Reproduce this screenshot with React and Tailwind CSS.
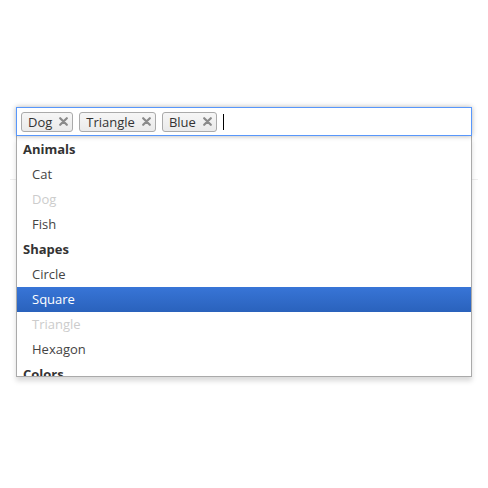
import React from 'react';

const chips = ['Dog', 'Triangle', 'Blue'];

const groups = [
  { label: 'Animals', items: [{ name: 'Cat' }, { name: 'Dog', selected: true }, { name: 'Fish' }] },
  {
    label: 'Shapes',
    items: [
      { name: 'Circle' },
      { name: 'Square', highlighted: true },
      { name: 'Triangle', selected: true },
      { name: 'Hexagon' },
    ],
  },
  { label: 'Colors', items: [{ name: 'Red' }, { name: 'Blue', selected: true }] },
];

const CloseIcon = () => (
  <svg width="9" height="9" viewBox="0 0 9 9" className="shrink-0">
    <path d="M1.2 1.2L7.8 7.8M7.8 1.2L1.2 7.8" stroke="#8a8a8a" strokeWidth="2.2" strokeLinecap="round" />
  </svg>
);

const Chip = ({ label }) => (
  <li className="flex items-center gap-[7px] h-5 pl-[6px] pr-[4px] rounded-[3px] border border-[#aaa] bg-gradient-to-b from-[#f6f6f6] to-[#eaeaea] text-[#333] text-[13px] leading-[18px]">
    <span>{label}</span>
    <CloseIcon />
  </li>
);

const Option = ({ item }) => {
  let cls = 'text-[#444]';
  if (item.selected) cls = 'text-[#ccc]';
  if (item.highlighted) cls = 'text-white bg-gradient-to-b from-[#3875d7] to-[#2a62bc]';
  return <li className={`h-[25px] pl-[15px] pr-[6px] leading-[25px] ${cls}`}>{item.name}</li>;
};

export default function App() {
  return (
    <div className="w-[488px] h-[488px] bg-white" style={{ fontFamily: '"Open Sans", "Noto Sans", sans-serif' }}>
      <div className="pt-[107px] pl-[16px]">
        <div className="relative w-[456px]">
          {/* input area */}
          <ul className="flex items-center gap-[6px] h-[29px] px-[4px] border border-[#5897fb] bg-white shadow-[0_0_5px_rgba(0,0,0,0.3)] relative z-20">
            {chips.map((c) => (
              <Chip key={c} label={c} />
            ))}
            <li className="w-px h-[16px] bg-black" />
          </ul>

          {/* dropdown */}
          <div className="absolute left-0 right-0 top-full z-10 h-[241px] overflow-hidden bg-white border border-t-0 border-[#aaa] shadow-[0_4px_5px_rgba(0,0,0,0.15)]">
            <ul className="pt-px text-[13px]">
              {groups.map((g) => (
                <React.Fragment key={g.label}>
                  <li className="h-[25px] pl-[6px] leading-[25px] font-bold text-[#333]">{g.label}</li>
                  {g.items.map((it) => (
                    <Option key={g.label + it.name} item={it} />
                  ))}
                </React.Fragment>
              ))}
            </ul>
          </div>
        </div>
      </div>
      {/* faint page rule under the dropdown */}
      <div className="mx-[10px] h-[44px] border-b border-[#eee]" />
    </div>
  );
}
